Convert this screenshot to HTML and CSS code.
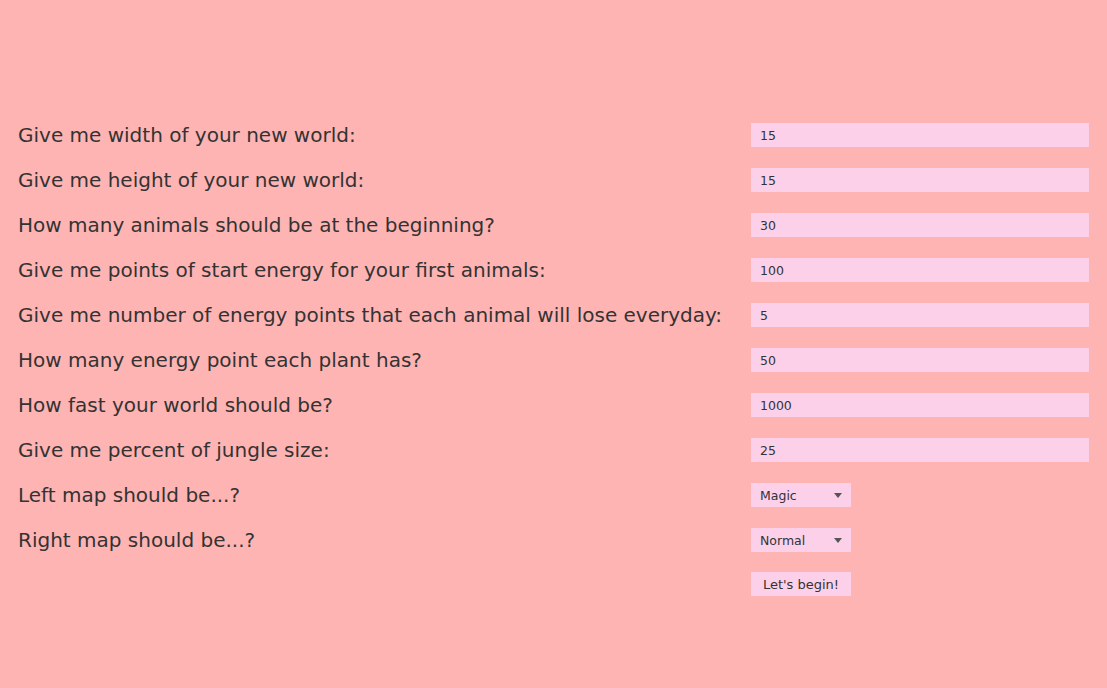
FILE: index.html
```html
<!DOCTYPE html>
<html>
<head>
<meta charset="utf-8">
<link rel="stylesheet" href="styles.css">
</head>
<body>
<div class="form">
  <div class="label">Give me width of your new world:</div>
  <div class="field">15</div>
  <div class="label">Give me height of your new world:</div>
  <div class="field">15</div>
  <div class="label">How many animals should be at the beginning?</div>
  <div class="field">30</div>
  <div class="label">Give me points of start energy for your first animals:</div>
  <div class="field">100</div>
  <div class="label">Give me number of energy points that each animal will lose everyday:</div>
  <div class="field">5</div>
  <div class="label">How many energy point each plant has?</div>
  <div class="field">50</div>
  <div class="label">How fast your world should be?</div>
  <div class="field">1000</div>
  <div class="label">Give me percent of jungle size:</div>
  <div class="field">25</div>
  <div class="label">Left map should be...?</div>
  <div class="select"><span>Magic</span><span class="arrow"></span></div>
  <div class="label">Right map should be...?</div>
  <div class="select"><span>Normal</span><span class="arrow"></span></div>
  <div class="label"></div>
  <div class="button">Let's begin!</div>
</div>
</body>
</html>
```
FILE: styles.css
```css
html, body {
  margin: 0;
  padding: 0;
  background: #ffb4b4;
  height: 100%;
}
body {
  font-family: "DejaVu Sans", sans-serif;
  color: #333333;
}
.form {
  display: grid;
  grid-template-columns: 733px 338px;
  row-gap: 21px;
  padding: 123px 0 0 18px;
}
.label {
  font-size: 20px;
  height: 24px;
  line-height: 25px;
  white-space: nowrap;
}
.field, .select, .button {
  background: #fdd0ea;
  height: 24px;
  box-sizing: border-box;
  font-size: 12.5px;
  line-height: 25px;
  color: #333333;
}
.field {
  padding-left: 9px;
}
.select {
  width: 100px;
  padding: 0 9px 0 9px;
  display: flex;
  align-items: center;
  justify-content: space-between;
}
.arrow {
  width: 0;
  height: 0;
  border-left: 4.5px solid transparent;
  border-right: 4.5px solid transparent;
  border-top: 5px solid #555555;
}
.button {
  width: 100px;
  text-align: center;
  margin-top: -1px;
  font-size: 13px;
}
```
